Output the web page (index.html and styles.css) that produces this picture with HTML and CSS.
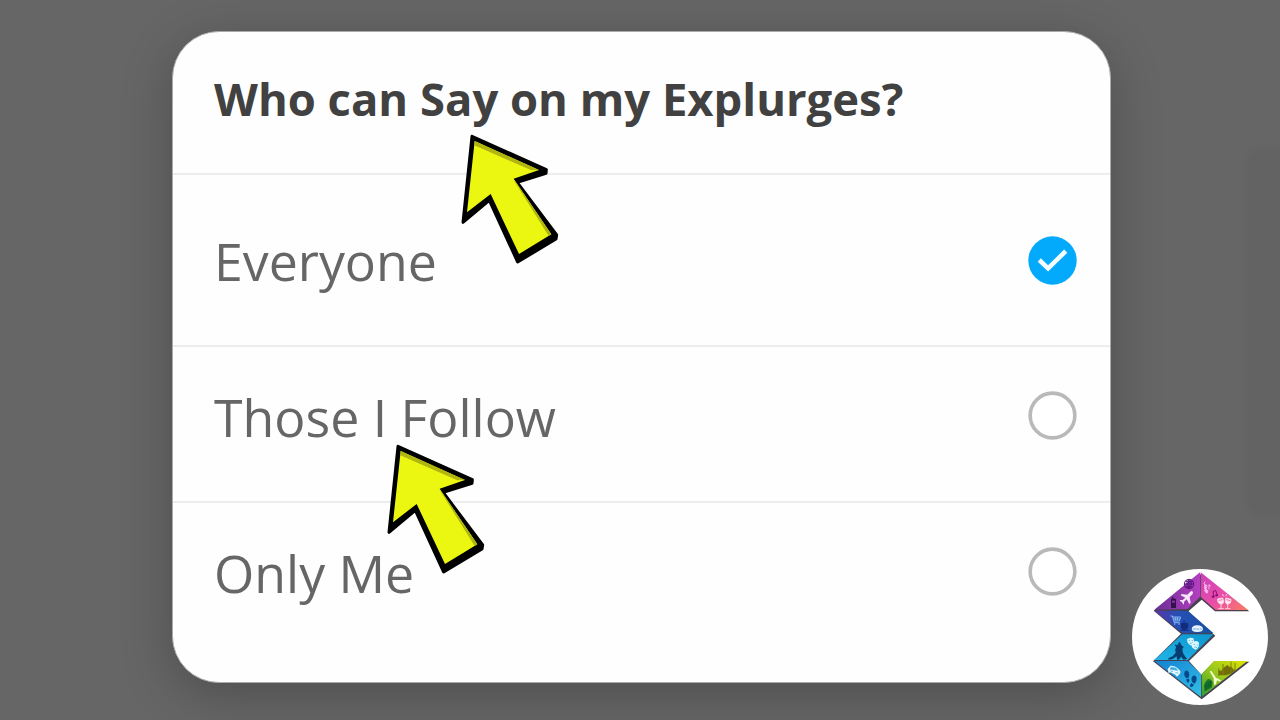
FILE: index.html
```html
<!DOCTYPE html>
<html lang="en">

<head>
    <meta charset="UTF-8">
    <title>Who can Say on my Explurges?</title>
    <link rel="stylesheet" href="styles.css">
</head>

<body>
    <div class="screen">
        <div class="back-panel"></div>
        <div class="dialog">
            <h1 class="dialog-title">Who can Say on my Explurges?</h1>
            <ul class="options">
                <li class="option option-first">
                    <span class="label">Everyone</span>
                    <svg class="radio" viewBox="0 0 50 50">
                        <circle cx="25" cy="25" r="24.7" fill="#03a9fb" />
                        <path d="M11.5 24.5 L20.5 33 L38.5 15.5" fill="none" stroke="#f4fdff" stroke-width="4.6" />
                    </svg>
                </li>
                <li class="option">
                    <span class="label">Those I Follow</span>
                    <svg class="radio" viewBox="0 0 50 50">
                        <circle cx="25" cy="25" r="22.8" fill="#fff" stroke="#b9b9b9" stroke-width="3.7" />
                    </svg>
                </li>
                <li class="option option-last">
                    <span class="label">Only Me</span>
                    <svg class="radio" viewBox="0 0 50 50">
                        <circle cx="25" cy="25" r="22.8" fill="#fff" stroke="#b9b9b9" stroke-width="3.7" />
                    </svg>
                </li>
            </ul>
        </div>

        <svg class="arrow arrow-title" viewBox="0 0 360 450">
            <path class="arrow-edge" d="M66 34 L289 134 L288 145 L202 172 L196 165 L320 330 L318 342 L203 411 L118 226 L39 292 Z" />
            <path class="arrow-fill" d="M74 48 L267 135 L191 161 L304 328 L207 387 L122 207 L51 262 Z" />
            <path class="arrow-shade" d="M74 48 L267 135 L244 136 L73 61 Z M191 165 L201 176 L304 328 L296 333 Z" />
        </svg>
        <svg class="arrow arrow-option" viewBox="0 0 360 450">
            <path class="arrow-edge" d="M66 34 L289 134 L288 145 L202 172 L196 165 L320 330 L318 342 L203 411 L118 226 L39 292 Z" />
            <path class="arrow-fill" d="M74 48 L267 135 L191 161 L304 328 L207 387 L122 207 L51 262 Z" />
            <path class="arrow-shade" d="M74 48 L267 135 L244 136 L73 61 Z M191 165 L201 176 L304 328 L296 333 Z" />
        </svg>

        <svg class="logo" viewBox="21 27 408 408">
            <defs>
                <linearGradient id="purple" x1="0" y1="0" x2="1" y2="0">
                    <stop offset="0" stop-color="#6b2f94" />
                    <stop offset="1" stop-color="#b43fc0" />
                </linearGradient>
                <linearGradient id="pink" x1="0" y1="0" x2="1" y2="1">
                    <stop offset="0" stop-color="#c93fbd" />
                    <stop offset=".55" stop-color="#ea4fa8" />
                    <stop offset="1" stop-color="#fa7d60" />
                </linearGradient>
                <linearGradient id="navy" x1="0" y1="0" x2="1" y2="0">
                    <stop offset="0" stop-color="#5a35a8" />
                    <stop offset=".4" stop-color="#264fb5" />
                    <stop offset="1" stop-color="#1550a0" />
                </linearGradient>
                <linearGradient id="cyan" x1="0" y1="1" x2="1" y2="0">
                    <stop offset="0" stop-color="#21b4e6" />
                    <stop offset="1" stop-color="#0c96cf" />
                </linearGradient>
                <linearGradient id="sky" x1="0" y1="0" x2="1" y2="1">
                    <stop offset="0" stop-color="#1480d2" />
                    <stop offset="1" stop-color="#32bfe6" />
                </linearGradient>
                <linearGradient id="green" x1="0" y1="1" x2="1" y2="0">
                    <stop offset="0" stop-color="#2b9d35" />
                    <stop offset=".45" stop-color="#92c520" />
                    <stop offset="1" stop-color="#dfe500" />
                </linearGradient>
            </defs>
            <circle cx="225" cy="231" r="204" fill="#fff" />
            <!-- drop edge under the ribbon -->
            <path d="M225 42 L373 154 L270 154 L230 119 L190 154 L271 227 L192 303 L229 344 L266 305 L373 305 L230 418 L84 304 L168 221 L86 152 Z" fill="#47404e" />
            <path d="M225 37 L225 110 L188 147 L88 149 Z" fill="url(#purple)" />
            <path d="M227 37 L369 150 L272 150 L227 110 Z" fill="url(#pink)" />
            <path d="M88 152 L188 152 L265 219 L172 219 Z" fill="url(#navy)" />
            <path d="M172 223 L266 223 L188 300 L88 300 Z" fill="url(#cyan)" />
            <path d="M88 303 L188 303 L228 343 L228 411 Z" fill="url(#sky)" />
            <path d="M230 342 L267 303 L367 303 L230 411 Z" fill="url(#green)" />

            <!-- globe, luggage, plane -->
            <g fill="none" stroke="#55117c" stroke-width="3">
                <circle cx="192" cy="72" r="14" />
                <path d="M178 72 H206 M181 82 Q192 77 203 82 M181 63 Q192 68 203 63 M192 58 V86 M192 58 Q178 72 192 86 M192 58 Q206 72 192 86" />
            </g>
            <path d="M138 144 V119 Q138 116 141 116 V111 H145 V116 H151 Q153 116 153 119 V144 Z" fill="#35104f" />
            <path d="M141 122 H150 V128 H141 Z" fill="#8539a1" />
            <path d="M202 94 Q206 97 203 102 L194 111 L197 128 L193 132 L185 118 L177 126 L177 133 L174 133 L171 126 L164 123 L166 120 L173 120 L181 113 L167 106 L170 102 L187 104 L196 95 Q199 92 202 94 Z" fill="#f5e6fa" />

            <!-- notes and glasses -->
            <path d="M240 88 Q236 78 243 74 Q250 79 242 86 Q236 93 243 98 Q251 99 248 91 Q242 87 241 94 M240 65 Q235 68 240 77 L246 100" fill="none" stroke="#ffd3f6" stroke-width="2.6" />
            <path d="M252 74 V88 M252 74 L257 78" fill="none" stroke="#ffd3f6" stroke-width="2.5" />
            <ellipse cx="264" cy="110" rx="4.5" ry="3.5" fill="#8d0d77" />
            <ellipse cx="275" cy="106" rx="4" ry="3.5" fill="#8d0d77" />
            <path d="M267 110 L264 95 L272 91 L277 106" fill="none" stroke="#8d0d77" stroke-width="3" />
            <g fill="#ffe3ef" stroke="#ffe3ef" stroke-width="2.5">
                <path d="M278 117 L293 114 Q300 132 289 132 Q277 132 278 117 Z M288 131 L288 145 M280 146 H296" />
                <path d="M303 114 L318 118 Q319 133 307 132 Q297 129 303 114 Z M308 131 L308 145 M300 146 H316" />
                <path d="M296 109 L292 102 M302 109 L305 103" fill="none" />
            </g>
            <path d="M281 121 L293 119 M304 119 L316 122" stroke="#ec5d9b" stroke-width="2.5" />

            <!-- cart, cup, burger -->
            <path d="M136 168 H142 L148 188 H164 M143 171 H167 L163 183 H147 M150 171 L152 182 M157 171 V182 M144 177 H165" fill="none" stroke="#8abcf5" stroke-width="2.8" />
            <circle cx="149" cy="192" r="2.4" fill="#8abcf5" />
            <circle cx="162" cy="192" r="2.4" fill="#8abcf5" />
            <path d="M169 190 H187 V204 Q185 209 178 209 Q170 209 169 204 Z M165 211 H191 M178 181 Q174 185 178 188" fill="#122b7c" stroke="#122b7c" stroke-width="2.5" />
            <path d="M188 193 Q193 197 187 202" fill="none" stroke="#122b7c" stroke-width="2.5" />
            <path d="M200 207 Q202 195 218 196 Q232 196 234 207 Q234 216 218 216 Q201 217 200 207 Z" fill="#e4f2ff" />
            <path d="M204 207 H230" stroke="#75a9dc" stroke-width="3" stroke-dasharray="8 2" />

            <!-- masks and dancers -->
            <path d="M186 238 Q194 230 205 235 Q211 250 199 257 Q185 251 186 238 Z M203 248 Q212 239 221 247 Q225 261 213 269 Q200 265 200 257 Q204 254 203 248 Z" fill="#ddf7ff" />
            <path d="M191 241 H195 M200 242 H204 M194 249 Q199 253 202 247 M206 253 H210 M215 255 H218 M208 263 Q212 257 216 264" fill="none" stroke="#2095c5" stroke-width="2" />
            <path d="M160 253 Q157 248 163 247 Q169 248 167 253 L174 260 L172 270 L175 281 L186 297 L176 299 L168 290 L162 299 H156 L155 289 L143 297 L131 299 L130 295 L143 289 L152 278 L151 269 L154 259 Z" fill="#073c71" />
            <path d="M151 255 L157 260 M152 270 L175 260" stroke="#073c71" stroke-width="5" />

            <!-- car and footprints -->
            <path d="M128 327 L137 317 Q150 316 158 325 L166 333 Q168 339 162 344 L156 350 L151 344 L136 337 L131 340 Z" fill="#e2f7ff" />
            <path d="M138 322 L153 325 L158 331 L136 328 Z M136 333 L144 335 M151 338 L160 339" fill="#40a6de" stroke="#40a6de" stroke-width="2" />
            <path d="M179 335 Q187 326 192 338 Q194 346 191 353 L183 354 Q175 344 179 335 Z M184 357 L192 356 Q195 365 189 368 Q183 366 184 357 Z M201 350 Q210 341 215 353 Q216 363 209 371 L201 366 Q197 357 201 350 Z M199 369 L207 374 Q202 384 196 380 Q193 375 199 369 Z" fill="#064989" />

            <!-- suitcase, tower, palace -->
            <path d="M237 377 L241 366 L256 358 L263 366 L261 382 L239 395 Z" fill="#16732c" />
            <path d="M243 371 L242 388 M250 367 L249 384 M256 363 L256 379 M244 365 L248 359 L253 359" fill="none" stroke="#0c561e" stroke-width="2.5" />
            <path d="M254 334 L259 333 L268 346 L273 353 L288 361 L285 365 L276 361 L273 373 L267 375 L266 355 Z" fill="#f4ffcb" />
            <path d="M280 346 V330 L290 333 Q290 325 300 320 L307 315 L313 320 Q323 319 324 328 L332 330 L320 340 L303 346 Z" fill="#726f0b" />
            <path d="M281 348 V325 M294 345 V312 M318 338 V305 M330 332 V309" stroke="#847f0b" stroke-width="3" />
        </svg>
    </div>
</body>

</html>
```
FILE: styles.css
```css
* {
    margin: 0;
    padding: 0;
    box-sizing: border-box;
}

body {
    background: #666;
    font-family: "Open Sans", "Noto Sans", sans-serif;
    overflow: hidden;
}

.screen {
    position: relative;
    width: 1280px;
    height: 720px;
    padding-top: 31px;
    padding-left: 172px;
    overflow: hidden;
}

.back-panel {
    position: absolute;
    top: 148px;
    right: -30px;
    width: 64px;
    height: 368px;
    border-radius: 18px;
    background: #636363;
    filter: blur(2px);
}

.dialog {
    position: relative;
    width: 939px;
    height: 652px;
    border: 1px solid #aaa;
    border-radius: 47px;
    background: #fefefe;
    box-shadow: 0 12px 52px rgba(0, 0, 0, .24);
    overflow: hidden;
}

.dialog-title {
    height: 143px;
    padding: 34px 0 0 41px;
    border-bottom: 2px solid #ededed;
    color: #414141;
    font-size: 45.4px;
    font-weight: 700;
    line-height: 64px;
    white-space: nowrap;
}

.options {
    list-style: none;
}

.option {
    display: flex;
    justify-content: space-between;
    align-items: center;
    height: 156px;
    padding: 0 33px 17px 41px;
    border-bottom: 2px solid #ededed;
}

.option-first {
    height: 172px;
    padding-bottom: 0;
}

.option-last {
    height: 137px;
    padding-bottom: 0;
    border-bottom: none;
}

.label {
    padding-top: 2px;
    color: #666;
    font-size: 51.8px;
    line-height: 70px;
    white-space: nowrap;
}

.radio {
    width: 49px;
    height: 49px;
}

.arrow {
    position: absolute;
    width: 120px;
    height: 150px;
}

.arrow-title {
    top: 125px;
    left: 450px;
}

.arrow-option {
    top: 435px;
    left: 376px;
}

.arrow-edge {
    fill: #000;
    stroke: #000;
    stroke-width: 9;
    stroke-linejoin: round;
}

.arrow-fill {
    fill: #ebf710;
}

.arrow-shade {
    fill: #b0b512;
}

.logo {
    position: absolute;
    top: 569px;
    left: 1132px;
    width: 136px;
    height: 136px;
}
```
